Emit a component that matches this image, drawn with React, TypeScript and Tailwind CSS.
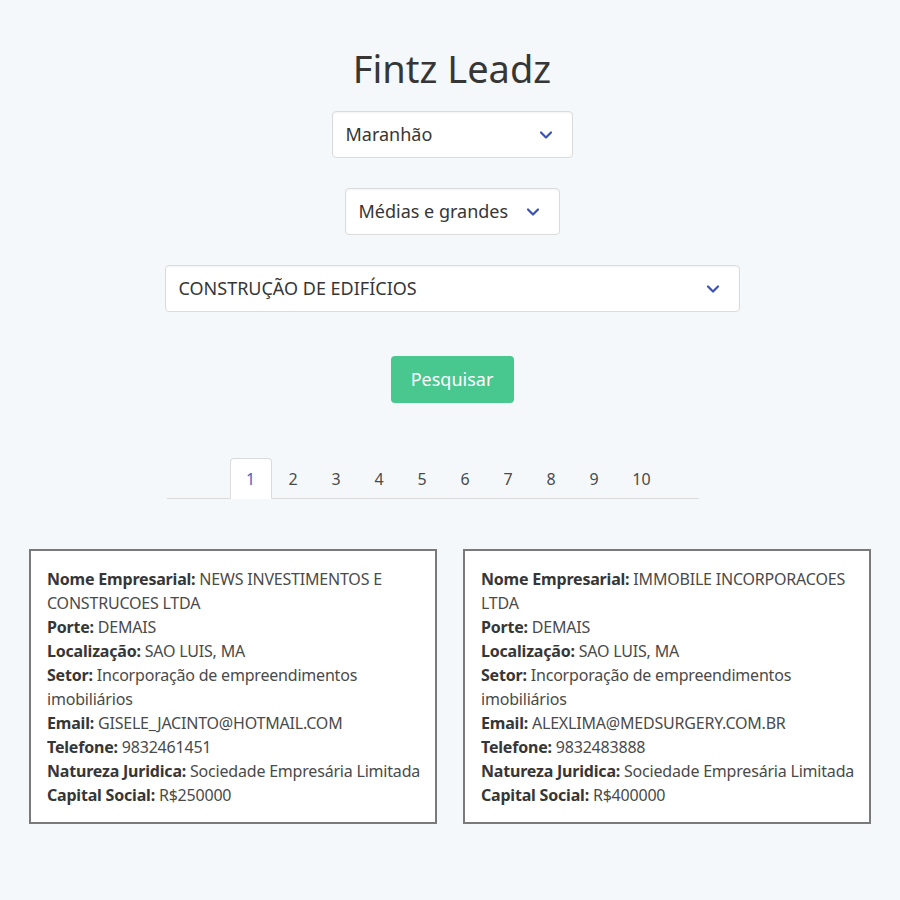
import { ChevronDown } from 'lucide-react'

type Empresa = {
  nome: string
  porte: string
  localizacao: string
  setor: string
  email: string
  telefone: string
  natureza: string
  capital: string
}

const empresas: Empresa[] = [
  {
    nome: 'NEWS INVESTIMENTOS E CONSTRUCOES LTDA',
    porte: 'DEMAIS',
    localizacao: 'SAO LUIS, MA',
    setor: 'Incorporação de empreendimentos imobiliários',
    email: 'GISELE_JACINTO@HOTMAIL.COM',
    telefone: '9832461451',
    natureza: 'Sociedade Empresária Limitada',
    capital: 'R$250000',
  },
  {
    nome: 'IMMOBILE INCORPORACOES LTDA',
    porte: 'DEMAIS',
    localizacao: 'SAO LUIS, MA',
    setor: 'Incorporação de empreendimentos imobiliários',
    email: 'ALEXLIMA@MEDSURGERY.COM.BR',
    telefone: '9832483888',
    natureza: 'Sociedade Empresária Limitada',
    capital: 'R$400000',
  },
]

const paginas = [1, 2, 3, 4, 5, 6, 7, 8, 9, 10]

function Select({ label, width }: { label: string; width: string }) {
  return (
    <div
      className={`${width} h-[47px] flex items-center justify-between bg-white border border-[#dbdbdb] rounded-[4px] shadow-[inset_0_1px_2px_rgba(10,10,10,0.05)] pl-[13px] pr-[16px]`}
    >
      <span className="text-[18px] text-[#363636]">{label}</span>
      <ChevronDown size={20} strokeWidth={2.6} className="text-[#3850b7]" />
    </div>
  )
}

function Campo({ label, valor }: { label: string; valor: string }) {
  return (
    <p>
      <strong className="font-bold text-[#363636]">{label}:</strong> {valor}
    </p>
  )
}

export default function App() {
  return (
    <div
      className="min-h-[900px] bg-[#f5f8fb] text-[#4a4a4a] flex flex-col"
      style={{ fontFamily: '"Noto Sans", sans-serif' }}
    >
      <div className="pl-[4px] flex flex-col items-center">
        <h1 className="mt-[46px] text-[38px] leading-[44px] text-[#363636]">Fintz Leadz</h1>

        <div className="mt-[21px]">
          <Select label="Maranhão" width="w-[241px]" />
        </div>
        <div className="mt-[30px]">
          <Select label="Médias e grandes" width="w-[215px]" />
        </div>
        <div className="mt-[30px]">
          <Select label="CONSTRUÇÃO DE EDIFÍCIOS" width="w-[575px]" />
        </div>

        <button className="mt-[44px] w-[123px] h-[47px] rounded-[4px] bg-[#48c78e] text-white text-[18px]">
          Pesquisar
        </button>

        <div className="mt-[55px] w-[575px] pl-[2px]">
          <div className="w-[532px] border-b border-[#dbdbdb] flex pl-[63px]">
            {paginas.map(p => (
              <div
                key={p}
                className={`h-[41px] -mb-px flex items-center justify-center text-[16px] ${
                  p === 10 ? 'w-[52px]' : p === 1 ? 'w-[42px]' : 'w-[43px]'
                } ${
                  p === 1
                    ? 'bg-white border border-[#dbdbdb] border-b-white rounded-t-[4px] text-[#485fc7]'
                    : 'text-[#4a4a4a]'
                }`}
              >
                {p}
              </div>
            ))}
          </div>
        </div>
      </div>

      <div className="mt-[50px] ml-[29px] grid grid-cols-2 gap-[26px] w-[842px]">
        {empresas.map(e => (
          <div
            key={e.email}
            className="bg-white border-2 border-[#7a7a7a] pl-4 pr-2 pt-4 pb-[15px] text-[16px] leading-[24px] tracking-[-0.2px]"
          >
            <Campo label="Nome Empresarial" valor={e.nome} />
            <Campo label="Porte" valor={e.porte} />
            <Campo label="Localização" valor={e.localizacao} />
            <Campo label="Setor" valor={e.setor} />
            <Campo label="Email" valor={e.email} />
            <Campo label="Telefone" valor={e.telefone} />
            <Campo label="Natureza Juridica" valor={e.natureza} />
            <Campo label="Capital Social" valor={e.capital} />
          </div>
        ))}
      </div>
    </div>
  )
}
